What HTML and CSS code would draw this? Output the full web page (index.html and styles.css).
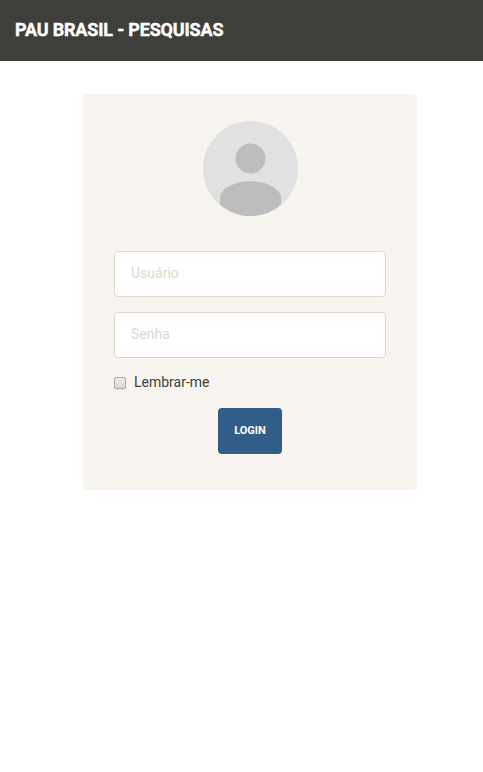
FILE: index.html
```html
<!DOCTYPE html>
<html lang="pt-BR">
<head>
<meta charset="utf-8">
<title>Pau Brasil - Pesquisas</title>
<link rel="stylesheet" href="styles.css">
</head>
<body>
<header class="navbar"><span class="brand">PAU BRASIL - PESQUISAS</span></header>
<main class="card">
  <svg class="avatar" viewBox="0 0 95 95">
    <defs><clipPath id="disc"><circle cx="47.5" cy="47.5" r="47.5"/></clipPath></defs>
    <g clip-path="url(#disc)">
      <rect width="95" height="95" fill="#e1e1e1"/>
      <circle cx="47.5" cy="37.5" r="15" fill="#bdbdbd"/>
      <path d="M17 95V76C17 70 28 60.300 47.500 60.300S78 70 78 76V95Z" fill="#bdbdbd"/>
    </g>
  </svg>
  <form class="form">
    <input class="field" type="text" placeholder="Usuário">
    <input class="field" type="password" placeholder="Senha">
    <label class="remember"><input class="check" type="checkbox"><span>Lembrar-me</span></label>
    <button class="login" type="button">LOGIN</button>
  </form>
</main>
</body>
</html>
```
FILE: styles.css
```css
* { box-sizing: border-box; }
body {
  margin: 0;
  background: #fff;
  color: #3e3f3a;
  font-family: Roboto, "Liberation Sans", sans-serif;
  font-size: 14px;
  line-height: 20px;
}
.navbar {
  height: 61px;
  padding: 20px 15px;
  background: #3e3f3a;
  color: #fff;
}
.brand {
  display: block;
  font-size: 18px;
  font-weight: 700;
  letter-spacing: -0.18px;
  -webkit-text-stroke: 0.4px #fff;
}
.card {
  width: 334px;
  height: 396px;
  margin: 33px 0 0 83px;
  padding: 27px 31px 0;
  background: #f8f5f0;
  border-radius: 4px;
}
.avatar {
  display: block;
  width: 95px;
  height: 95px;
  margin: 0 88px 35px 89px;
}
.form {
  display: flex;
  flex-direction: column;
}
.field {
  height: 46px;
  margin: 0 0 15px;
  padding: 11px 16px 13px;
  border: 1px solid #dfd7ca;
  border-radius: 4px;
  background: #fff;
  font: 14px/20px Roboto, "Liberation Sans", sans-serif;
}
.field::placeholder { color: #dfd7ca; opacity: 1; }
.remember {
  display: flex;
  gap: 8px;
  height: 20px;
  margin: -1px 0 16px;
}
.check {
  appearance: none;
  width: 12px;
  height: 12px;
  margin: 5px 0 0;
  border: 1px solid #aaa;
  border-radius: 2px;
  background: linear-gradient(#ececec, #d8d8d8);
  box-shadow: 0 1px 0 #e4e1dc;
}
.login {
  align-self: center;
  width: 64px;
  height: 46px;
  padding: 0 0 1px;
  border: 0;
  border-radius: 4px;
  background: #325d88;
  color: #fff;
  font: 700 11px/22px Roboto, "Liberation Sans", sans-serif;
}
```
